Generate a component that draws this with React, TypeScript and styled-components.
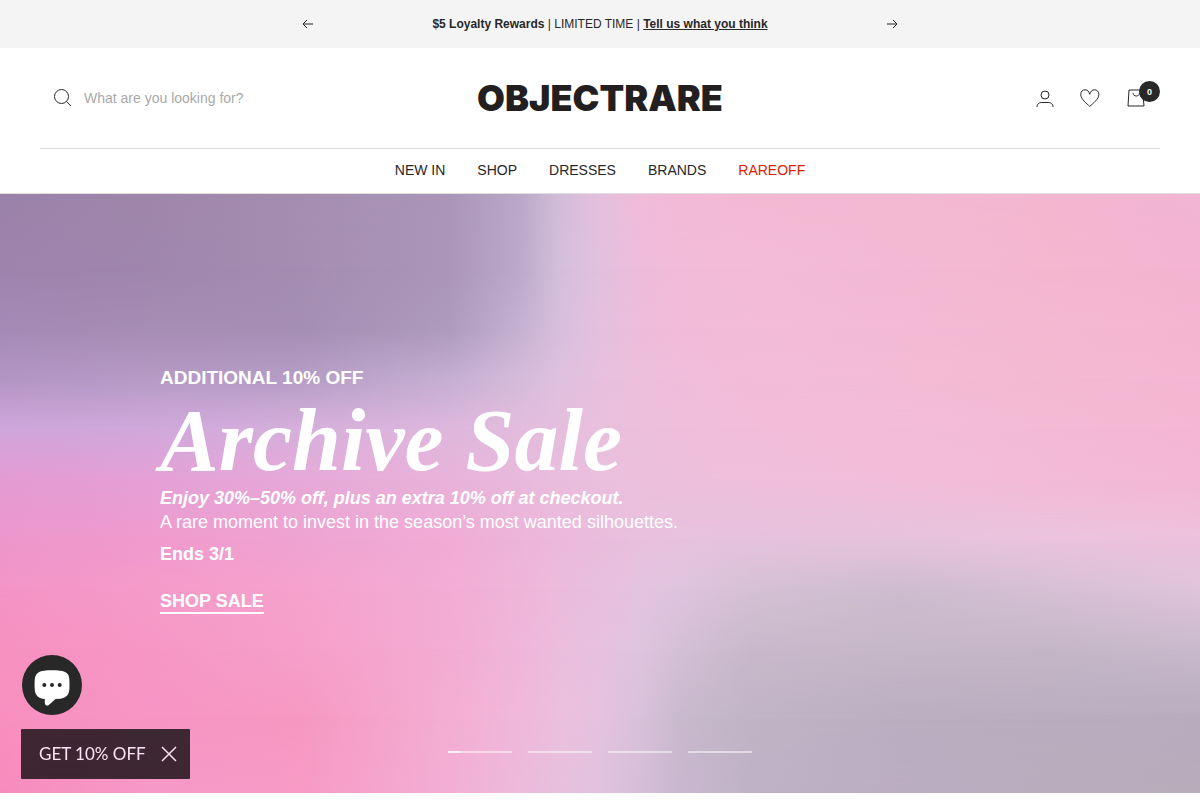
import React from "react";
import styled, { createGlobalStyle } from "styled-components";

const GlobalStyle = createGlobalStyle`
  *, *::before, *::after { box-sizing: border-box; }
  body {
    margin: 0;
    background: #fff;
    color: #282828;
    font-family: "Liberation Sans", Arial, sans-serif;
    font-size: 14px;
  }
  button { border: 0; padding: 0; background: none; color: inherit; font: inherit; cursor: pointer; }
  a { color: inherit; text-decoration: none; }
  svg { display: block; }
`;

const Announcement = styled.section`
  display: flex;
  align-items: center;
  justify-content: center;
  height: 48px;
  background: #f4f4f4;
`;

const AnnouncementInner = styled.div`
  display: flex;
  align-items: center;
  justify-content: space-between;
  width: 100%;
  max-width: 600px;
`;

const AnnouncementText = styled.p`
  margin: 0;
  font-size: 12px;
  line-height: 20px;
`;

const FeedbackLink = styled.a`
  font-weight: 700;
  text-decoration: underline;
`;

const ArrowButton = styled.button`
  display: grid;
  place-items: center;
  width: 16px;
  height: 24px;
`;

const Header = styled.header`
  position: relative;
  z-index: 1;
  padding: 0 40px;
  background: #fff;
  box-shadow: 0 1px 0 #dfdfdf;
`;

const HeaderTop = styled.div`
  display: grid;
  grid-template-columns: 1fr auto 1fr;
  align-items: center;
  height: 100px;
`;

const SearchForm = styled.form`
  display: flex;
  align-items: center;
  gap: 12px;
  padding-left: 13px;
`;

const SearchInput = styled.input`
  flex: 1;
  min-width: 0;
  border: 0;
  padding: 0;
  outline: 0;
  background: none;
  color: #282828;
  font: inherit;
  line-height: 20px;
  &::placeholder { color: #a9a9a9; opacity: 1; }
`;

const Logo = styled.a`
  color: #231f20;
  font-family: Inter, sans-serif;
  font-size: 36px;
  font-weight: 900;
  line-height: 40px;
`;

const HeaderActions = styled.div`
  display: flex;
  align-items: center;
  justify-content: flex-end;
  gap: 24px;
  padding-right: 13px;
`;

const IconLink = styled.a`
  position: relative;
  display: block;
`;

const CartCount = styled.span`
  position: absolute;
  top: -6px;
  left: 14px;
  display: grid;
  place-items: center;
  width: 21px;
  height: 21px;
  border-radius: 50%;
  background: #282828;
  color: #fff;
  font-size: 9px;
  font-weight: 700;
`;

const Nav = styled.nav`
  display: flex;
  justify-content: center;
  gap: 32px;
  height: 45px;
  border-top: 1px solid #dfdfdf;
  line-height: 42px;
`;

const NavLink = styled.a<{ $sale?: boolean }>`
  color: ${(p) => (p.$sale ? "#dc2300" : "#282828")};
`;

const Hero = styled.section`
  position: relative;
  display: flex;
  flex-direction: column;
  aspect-ratio: 2 / 1;
  overflow: hidden;
  color: #fff;
`;

const Backdrop = styled.svg`
  position: absolute;
  inset: 0;
  width: 100%;
  height: 100%;
`;

const HeroContent = styled.div`
  position: relative;
  flex: 1;
  display: flex;
  flex-direction: column;
  align-items: flex-start;
  padding: 173px 24px 0 160px;
  font-size: 18px;
  line-height: 24px;
`;

const Eyebrow = styled.p`
  margin: 0;
  font-size: 19px;
  font-weight: 700;
`;

const HeroTitle = styled.h1`
  margin: 0;
  padding-top: 6px;
  font-family: "Liberation Serif", "Times New Roman", serif;
  font-size: 88px;
  font-style: italic;
  font-weight: 700;
  line-height: 90px;
`;

const HeroText = styled.p<{ $strong?: boolean }>`
  margin: 0;
  font-style: ${(p) => (p.$strong ? "italic" : "normal")};
  font-weight: ${(p) => (p.$strong ? 700 : 400)};
`;

const Deadline = styled.p`
  margin: 8px 0 24px;
  font-weight: 700;
`;

const ShopLink = styled.a`
  border-bottom: 2px solid #fff;
  font-weight: 700;
  line-height: 22px;
`;

const SlideBars = styled.div`
  position: relative;
  display: flex;
  justify-content: center;
  gap: 16px;
  padding-bottom: 32px;
`;

const SlideBar = styled.button<{ $progress: number }>`
  width: 64px;
  height: 18px;
  background:
    linear-gradient(rgba(255, 255, 255, 0.6), rgba(255, 255, 255, 0.6)) 0 50% / ${(p) => p.$progress}% 2px no-repeat,
    linear-gradient(rgba(255, 255, 255, 0.5), rgba(255, 255, 255, 0.5)) 0 50% / 100% 2px no-repeat;
`;

const ChatButton = styled.button`
  position: fixed;
  left: 22px;
  bottom: 85px;
  z-index: 2;
  width: 60px;
  height: 60px;
  border-radius: 50%;
  background: #282828;
`;

const Offer = styled.aside`
  position: fixed;
  left: 21px;
  bottom: 21px;
  z-index: 2;
  display: flex;
  align-items: center;
  gap: 15px;
  height: 50px;
  padding: 0 13px 0 18px;
  border-radius: 1px;
  background: rgba(41, 27, 34, 0.9);
  color: #ffe3f2;
`;

const OfferButton = styled.button`
  font-family: Lato, sans-serif;
  font-size: 17px;
  line-height: 24px;
`;

const columns = [0, 150, 300, 450, 520, 560, 600, 640, 680, 750, 900, 1050, 1200];

const rows: { y: number; colors: string[] }[] = [
  { y: 0, colors: ["#9b82a9", "#9f86aa", "#a58eb1", "#ab96b9", "#bba8c9", "#d2bdd9", "#e5c0de", "#f0bcdb", "#f3bad7", "#f4b9d3", "#f3b9d2", "#f4b6cf", "#f2b5d3"] },
  { y: 76, colors: ["#9e84ad", "#9f86ad", "#a48db1", "#ab96b9", "#bca9ca", "#d3bfdc", "#e3c0de", "#edbcdb", "#f2bbd9", "#f4bbd6", "#f3b9d3", "#f4b6cf", "#f3b4d0"] },
  { y: 136, colors: ["#a48ab5", "#a68db4", "#a58eb4", "#ae9bbd", "#c5b1d1", "#d8bfdd", "#e4c0de", "#ecbddb", "#f1bbd9", "#f3bbd7", "#f4bad4", "#f4b8d1", "#f4b5d0"] },
  { y: 186, colors: ["#b395c4", "#b69bc5", "#b69dc6", "#c5afd2", "#d5bbdb", "#dfc0de", "#e7c0de", "#ecbfdc", "#efbddb", "#f2bcd8", "#f4bbd4", "#f4b9d2", "#f4b6d1"] },
  { y: 236, colors: ["#cfa6dc", "#d0a8db", "#d6b0dc", "#dfb7dd", "#e2bcdd", "#e5bedd", "#e9bfdd", "#ecbfdc", "#eebedb", "#f1bdda", "#f3bcd7", "#f4bad4", "#f4b6d1"] },
  { y: 286, colors: ["#e39bd2", "#e4a0d6", "#e6a9d8", "#e8b3da", "#e8b9dc", "#e9bddd", "#eabfdd", "#ecc0dd", "#edbfdc", "#efbfdc", "#f2bdda", "#f3bad6", "#f4b8d3"] },
  { y: 346, colors: ["#ec97cc", "#f09ace", "#efa3d1", "#f0acd5", "#edb4d9", "#ebb9db", "#eabcdc", "#e8c0de", "#e7c2de", "#e6c2de", "#e6c3dd", "#ebc3de", "#edc1dd"] },
  { y: 396, colors: ["#f394c6", "#f59bc9", "#f5a2cd", "#f2add5", "#efb5d9", "#ebbbdc", "#e8bfde", "#e4c3df", "#dfc4de", "#d5c1d5", "#cdbccf", "#d6c0d5", "#dfc4db"] },
  { y: 456, colors: ["#f791c0", "#f697c6", "#f69fca", "#f3acd3", "#efb6da", "#ebbddd", "#e7c0df", "#dfc4de", "#d3bfd6", "#c9b8cb", "#c6b7c8", "#c5b6c7", "#c9b9cc"] },
  { y: 526, colors: ["#f88fbf", "#f695c4", "#f698c2", "#f4aed3", "#efb8da", "#ebbfdd", "#e5c2df", "#d8c1da", "#c9b9cd", "#c1b4c6", "#bbaec1", "#b9adbf", "#b7acbe"] },
  { y: 600, colors: ["#f68cbd", "#f699c8", "#f79ac5", "#f2aed5", "#ebbadb", "#e6c0dd", "#e0c2de", "#d5bed7", "#c9b7cf", "#bfb1c6", "#bbacc2", "#b8adbd", "#b5acba"] },
];

/* Painted wash: each band of colour fades into the next one down. */
const Wash = () => (
  <Backdrop viewBox="0 0 1200 600" preserveAspectRatio="none" aria-hidden="true">
    <defs>
      {rows.map((row, i) => (
        <React.Fragment key={row.y}>
          <linearGradient id={`band-${i}`}>
            {row.colors.map((color, c) => (
              <stop key={c} offset={columns[c] / 1200} stopColor={color} />
            ))}
          </linearGradient>
          {i > 0 && (
            <>
              <linearGradient id={`fade-${i}`} gradientUnits="userSpaceOnUse" x1="0" x2="0" y1={rows[i - 1].y} y2={row.y}>
                <stop offset="0" stopColor="#fff" stopOpacity="0" />
                <stop offset="1" stopColor="#fff" />
              </linearGradient>
              <mask id={`mask-${i}`} maskUnits="userSpaceOnUse" x="0" y="0" width="1200" height="600">
                <rect width="1200" height="600" fill={`url(#fade-${i})`} />
              </mask>
            </>
          )}
        </React.Fragment>
      ))}
    </defs>
    {rows.map((row, i) => (
      <rect key={row.y} width="1200" height="600" fill={`url(#band-${i})`} mask={i > 0 ? `url(#mask-${i})` : undefined} />
    ))}
  </Backdrop>
);

const ArrowIcon = ({ back = false }: { back?: boolean }) => (
  <svg width="12" height="10" viewBox="0 0 12 10" fill="none" stroke="#282828" aria-hidden="true">
    {back ? <path d="M11 5H1M5 1 1 5l4 4" /> : <path d="M1 5h10M7 1l4 4-4 4" />}
  </svg>
);

const SearchIcon = () => (
  <svg width="19" height="20" viewBox="0 0 19 20" fill="none" stroke="#282828" aria-hidden="true">
    <circle cx="8.500" cy="8.500" r="7" />
    <path d="m13.500 13.500 4.500 4.500" />
  </svg>
);

const AccountIcon = () => (
  <svg width="20" height="22" viewBox="0 0 20 22" fill="none" stroke="#282828" aria-hidden="true">
    <circle cx="10" cy="8" r="4" />
    <path d="M2 20c0-3.500 2.500-4.500 5-4.500h6c2.500 0 5 1 5 4.500" />
  </svg>
);

const HeartIcon = () => (
  <svg width="22" height="22" viewBox="0 0 22 22" fill="none" stroke="#282828" strokeLinejoin="round" aria-hidden="true">
    <path d="M10.700 19.300C8 17 1.700 12 1.700 7.500c0-3 2-4.700 4.300-4.700 2.400 0 4 1.600 4.700 4.500.8-2.900 2.400-4.500 4.800-4.500 2.400 0 4.400 1.700 4.400 4.700 0 4.500-6.400 9.500-9.200 11.800z" />
  </svg>
);

const BagIcon = () => (
  <svg width="22" height="22" viewBox="0 0 22 22" fill="none" stroke="#282828" aria-hidden="true">
    <path d="M4 3h13.500l1.500 16H3zM8 6c0 4 6.500 4 6.500 0" />
  </svg>
);

const ChatIcon = () => (
  <svg width="60" height="60" viewBox="0 0 60 60" aria-hidden="true">
    <path
      fill="#fff"
      d="M22 15.700c5-.5 11-.5 16 0 6 .5 9 3 9.300 8.300.3 4 .3 7.500 0 11-.6 5.300-3.500 8-9 8.700l-4.800.3-6.700 6c-1.500 1.300-4 .4-4-2v-4c-6-.4-9.400-3.500-10-9-.3-4-.3-7 0-11 .5-5 3.700-7.800 9.200-8.300z"
    />
    <g fill="#282828">
      <circle cx="22.300" cy="30" r="2" />
      <circle cx="30" cy="30" r="2" />
      <circle cx="37.700" cy="30" r="2" />
    </g>
  </svg>
);

const CloseIcon = () => (
  <svg width="16" height="16" viewBox="0 0 16 16" fill="none" stroke="#ffe3f2" strokeWidth="1.500" aria-hidden="true">
    <path d="m1 1 14 14M15 1 1 15" />
  </svg>
);

const links = [
  { label: "NEW IN" },
  { label: "SHOP" },
  { label: "DRESSES" },
  { label: "BRANDS" },
  { label: "RAREOFF", sale: true },
];

export default function App() {
  return (
    <>
      <GlobalStyle />
      <Announcement>
        <AnnouncementInner>
          <ArrowButton aria-label="Previous">
            <ArrowIcon back />
          </ArrowButton>
          <AnnouncementText>
            <strong>$5 Loyalty Rewards</strong> | LIMITED TIME | <FeedbackLink href="#feedback">Tell us what you think</FeedbackLink>
          </AnnouncementText>
          <ArrowButton aria-label="Next">
            <ArrowIcon />
          </ArrowButton>
        </AnnouncementInner>
      </Announcement>

      <Header>
        <HeaderTop>
          <SearchForm role="search">
            <SearchIcon />
            <SearchInput type="search" aria-label="Search" placeholder="What are you looking for?" />
          </SearchForm>
          <Logo href="#home">OBJECTRARE</Logo>
          <HeaderActions>
            <IconLink href="#account" aria-label="Account">
              <AccountIcon />
            </IconLink>
            <IconLink href="#wishlist" aria-label="Wishlist">
              <HeartIcon />
            </IconLink>
            <IconLink href="#cart" aria-label="Cart">
              <BagIcon />
              <CartCount>0</CartCount>
            </IconLink>
          </HeaderActions>
        </HeaderTop>
        <Nav aria-label="Main">
          {links.map((link) => (
            <NavLink key={link.label} href="#shop" $sale={link.sale}>
              {link.label}
            </NavLink>
          ))}
        </Nav>
      </Header>

      <main>
        <Hero>
          <Wash />
          <HeroContent>
            <Eyebrow>ADDITIONAL 10% OFF</Eyebrow>
            <HeroTitle>Archive Sale</HeroTitle>
            <HeroText $strong>Enjoy 30%–50% off, plus an extra 10% off at checkout.</HeroText>
            <HeroText>A rare moment to invest in the season’s most wanted silhouettes.</HeroText>
            <Deadline>Ends 3/1</Deadline>
            <ShopLink href="#sale">SHOP SALE</ShopLink>
          </HeroContent>
          <SlideBars>
            {[20, 0, 0, 0].map((progress, i) => (
              <SlideBar key={i} $progress={progress} aria-label={`Slide ${i + 1}`} />
            ))}
          </SlideBars>
        </Hero>
      </main>

      <ChatButton aria-label="Chat">
        <ChatIcon />
      </ChatButton>
      <Offer>
        <OfferButton>GET 10% OFF</OfferButton>
        <button aria-label="Close">
          <CloseIcon />
        </button>
      </Offer>
    </>
  );
}
